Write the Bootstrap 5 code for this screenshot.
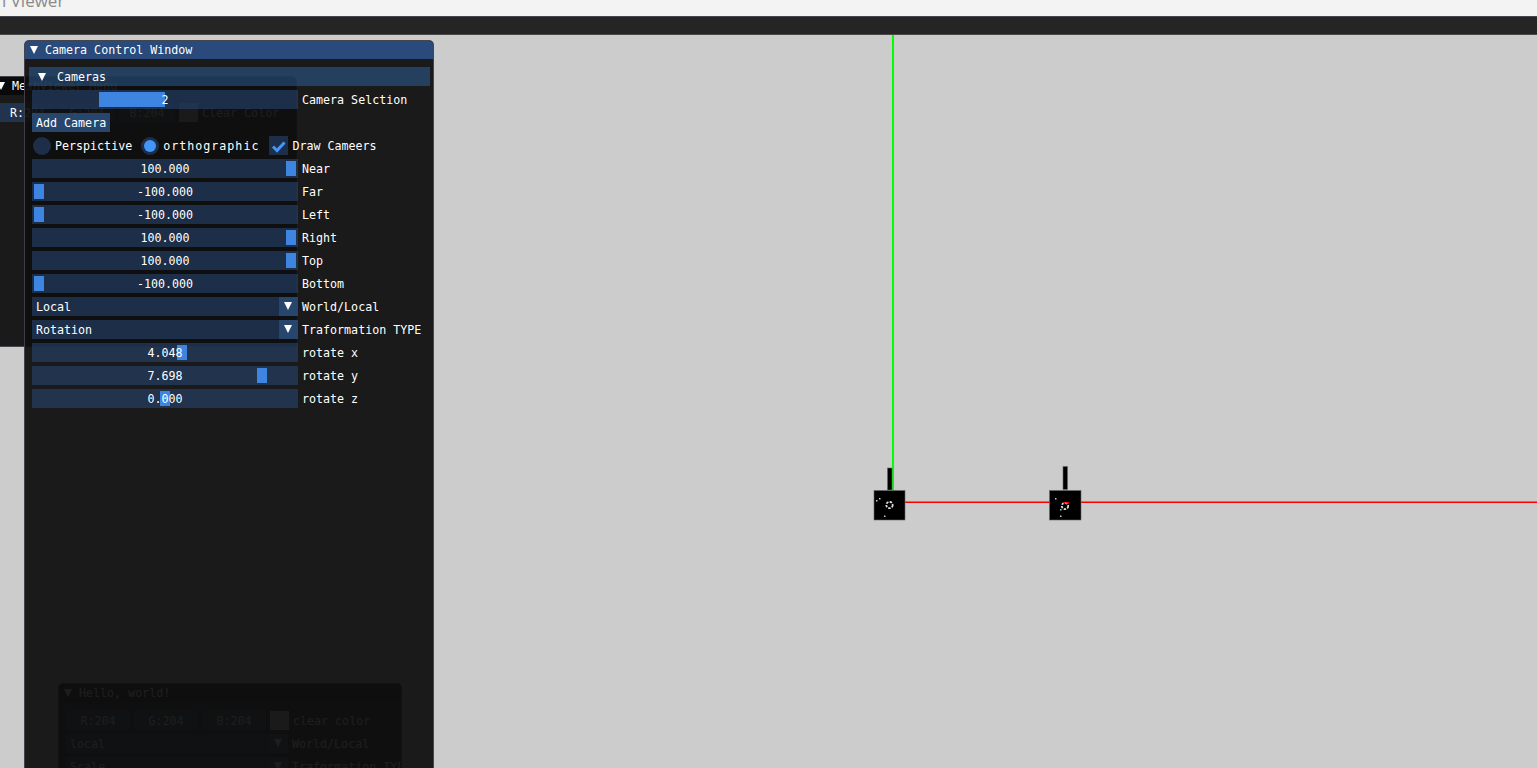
<!DOCTYPE html>
<html lang="en">
<head>
    <meta charset="UTF-8">
    <meta name="viewport" content="width=device-width, initial-scale=1.0">
    <title>Mesh Viewer</title>
    <link href="https://cdn.jsdelivr.net/npm/bootstrap@5.3.0/dist/css/bootstrap.min.css" rel="stylesheet">
    <style>
        html, body { height: 100%; overflow: hidden; }
        .app-title { height: 17px; background: #f3f3f3; border-bottom: 1px solid #45454d; overflow: hidden; }
        .app-title span { display: block; margin-top: -9px; padding-left: 2px; font: 17px/20px "Open Sans", sans-serif; color: #8a8a8a; }
        .app-menu { height: 18px; background: #252525; border-bottom: 1px solid #4a4a4a; }
        .desk { background: #ccc; overflow: hidden; }
        .scene { position: absolute; left: 0; top: 0; }

        .gui-window { position: absolute; background: rgba(15, 15, 15, .94); border: 1px solid rgba(110, 110, 128, .5); border-radius: 5px 5px 0 0;
            font: 11.67px/21px "DejaVu Sans Mono", monospace; color: #fff; white-space: nowrap; overflow: hidden; }
        .win-camera { left: 24px; top: 5px; width: 410px; height: 800px; }
        .win-mesh { left: -9px; top: 41px; width: 306px; height: 271px; }
        .win-hello { left: 58px; top: 648px; width: 344px; height: 200px; }

        .gui-title { height: 19px; margin-top: -1px; padding: 2px 0 0 5px; background: #0a0a0a; gap: 7px; }
        .win-camera .gui-title { background: #294a7a; }
        .gui-arrow { flex: none; width: 0; height: 0; margin-top: -2px; border-left: 4.5px solid transparent; border-right: 4.5px solid transparent; border-top: 8px solid #fff; }
        .gui-body { padding: 8px 3px 8px 4px; }
        .gui-header { height: 19px; margin-bottom: 4px; padding: 2px 0 0 9px; gap: 11px; background: rgba(66, 150, 250, .31); }
        .gui-rows { padding-left: 3px; }
        .gui-row { height: 19px; margin-bottom: 4px; gap: 4px; }
        .gui-frame { position: relative; flex: none; width: 266px; height: 19px; text-align: center; background: rgba(41, 74, 122, .54); }
        .gui-frame span { position: relative; }
        .gui-grab { position: absolute; top: 2px; height: 15px; width: 10px; background: #3d85e0; }
        .gui-combo { padding-left: 4px; text-align: left; }
        .gui-combo i { position: absolute; right: 0; top: 0; width: 19px; height: 19px; background: #26466e; }
        .gui-combo i::after { content: ""; position: absolute; left: 5px; top: 5px; border-left: 4.5px solid transparent; border-right: 4.5px solid transparent; border-top: 8px solid #fff; }
        .gui-btn { padding: 0 4px; background: #26466e; }
        .gui-radio { flex: none; width: 18px; height: 18px; margin-top: 1px; border-radius: 50%; background: rgba(41, 74, 122, .54); }
        .radio-first { margin-left: 1px; }
        .gui-radio b { width: 12px; height: 12px; border-radius: 50%; background: #4296fa; }
        .gui-check { flex: none; width: 19px; height: 19px; background: rgba(41, 74, 122, .54); }
        .wide-text { letter-spacing: 1px; }
        .after-radio { margin-right: 5px; }
        .after-wide { margin-right: 6px; }
        .gui-swatch { flex: none; width: 19px; height: 19px; background: #ccc; }

        .mesh-rows { padding: 8px 0 0 8px; gap: 4px; }
        .mesh-r { width: 55px; }
        .mesh-g { width: 56px; }
        .mesh-b { width: 56px; }
        .hello-rows { padding: 9px 0 0 7px; }
        .hello-c { width: 64px; }
        .hello-w { width: 222px; }
    </style>
</head>
<body class="d-flex flex-column">
    <div class="app-title"><span>l Viewer</span></div>
    <div class="app-menu"></div>

    <div class="desk position-relative flex-grow-1">
        <svg class="scene" width="1537" height="733" viewBox="0 35 1537 733">
            <rect x="892" y="35" width="2" height="456" fill="#0f0"/>
            <rect x="905" y="501.5" width="632" height="1.5" fill="#f00"/>
            <g stroke="#666" stroke-width=".6">
                <rect x="874" y="490.5" width="31" height="29.5"/>
                <rect x="887.5" y="468" width="4.5" height="22"/>
                <rect x="1049.5" y="490.5" width="31.5" height="29.5"/>
                <rect x="1063" y="466.5" width="4.5" height="23"/>
            </g>
            <g fill="none" stroke="#ddd" stroke-width="1.8" stroke-dasharray="2.5 1.2">
                <circle cx="889.5" cy="505" r="3.2"/>
                <circle cx="1065" cy="506" r="3.2"/>
            </g>
            <g fill="#ccc">
                <rect x="876" y="500" width="1.5" height="1.5"/>
                <rect x="879" y="498" width="1.5" height="1.5"/>
                <rect x="884" y="515.5" width="1.5" height="1.5"/>
                <rect x="1055" y="498" width="1.5" height="1.5"/>
                <rect x="1060" y="515.5" width="1.5" height="1.5"/>
                <rect x="1060" y="509" width="1.5" height="1.5"/>
            </g>
            <g fill="#f00">
                <rect x="1063" y="502" width="2.5" height="1.5"/>
                <rect x="1066" y="502" width="3" height="1.5"/>
            </g>
        </svg>

        <div class="gui-window win-hello">
            <div class="gui-title d-flex align-items-center"><span class="gui-arrow"></span><span>Hello, world!</span></div>
            <div class="hello-rows">
                <div class="gui-row d-flex">
                    <div class="gui-frame hello-c">R:204</div>
                    <div class="gui-frame hello-c">G:204</div>
                    <div class="gui-frame hello-c">B:204</div>
                    <div class="gui-swatch"></div>
                    <div>clear color</div>
                </div>
                <div class="gui-row d-flex">
                    <div class="gui-frame hello-w gui-combo">local<i></i></div>
                    <div>World/Local</div>
                </div>
                <div class="gui-row d-flex">
                    <div class="gui-frame hello-w gui-combo">Scale<i></i></div>
                    <div>Traformation TYPE</div>
                </div>
            </div>
        </div>

        <div class="gui-window win-mesh">
            <div class="gui-title d-flex align-items-center"><span class="gui-arrow"></span><span>MeshViewer Menu</span></div>
            <div class="mesh-rows d-flex">
                <div class="gui-frame mesh-r">R:204</div>
                <div class="gui-frame mesh-g">G:204</div>
                <div class="gui-frame mesh-b">B:204</div>
                <div class="gui-swatch"></div>
                <div>Clear Color</div>
            </div>
        </div>

        <div class="gui-window win-camera">
            <div class="gui-title d-flex align-items-center"><span class="gui-arrow"></span><span>Camera Control Window</span></div>
            <div class="gui-body">
                <div class="gui-header d-flex align-items-center"><span class="gui-arrow"></span><span>Cameras</span></div>
                <div class="gui-rows">
                    <div class="gui-row d-flex">
                        <div class="gui-frame"><div class="gui-grab" style="left: 67px; width: 66px"></div><span>2</span></div>
                        <div>Camera Selction</div>
                    </div>
                    <div class="gui-row d-flex"><div class="gui-btn">Add Camera</div></div>
                    <div class="gui-row d-flex">
                        <div class="gui-radio radio-first"></div>
                        <div class="after-radio">Perspictive</div>
                        <div class="gui-radio d-flex align-items-center justify-content-center"><b></b></div>
                        <div class="wide-text after-wide">orthographic</div>
                        <div class="gui-check">
                            <svg width="19" height="19" viewBox="0 0 19 19"><path d="M4 9.5 L8 13.5 L15.5 5.5" fill="none" stroke="#4296fa" stroke-width="3"/></svg>
                        </div>
                        <div>Draw Cameers</div>
                    </div>
                    <div class="gui-row d-flex">
                        <div class="gui-frame"><div class="gui-grab" style="left: 254px"></div><span>100.000</span></div>
                        <div>Near</div>
                    </div>
                    <div class="gui-row d-flex">
                        <div class="gui-frame"><div class="gui-grab" style="left: 2px"></div><span>-100.000</span></div>
                        <div>Far</div>
                    </div>
                    <div class="gui-row d-flex">
                        <div class="gui-frame"><div class="gui-grab" style="left: 2px"></div><span>-100.000</span></div>
                        <div>Left</div>
                    </div>
                    <div class="gui-row d-flex">
                        <div class="gui-frame"><div class="gui-grab" style="left: 254px"></div><span>100.000</span></div>
                        <div>Right</div>
                    </div>
                    <div class="gui-row d-flex">
                        <div class="gui-frame"><div class="gui-grab" style="left: 254px"></div><span>100.000</span></div>
                        <div>Top</div>
                    </div>
                    <div class="gui-row d-flex">
                        <div class="gui-frame"><div class="gui-grab" style="left: 2px"></div><span>-100.000</span></div>
                        <div>Bottom</div>
                    </div>
                    <div class="gui-row d-flex">
                        <div class="gui-frame gui-combo">Local<i></i></div>
                        <div>World/Local</div>
                    </div>
                    <div class="gui-row d-flex">
                        <div class="gui-frame gui-combo">Rotation<i></i></div>
                        <div>Traformation TYPE</div>
                    </div>
                    <div class="gui-row d-flex">
                        <div class="gui-frame"><div class="gui-grab" style="left: 145px"></div><span>4.048</span></div>
                        <div>rotate x</div>
                    </div>
                    <div class="gui-row d-flex">
                        <div class="gui-frame"><div class="gui-grab" style="left: 225px"></div><span>7.698</span></div>
                        <div>rotate y</div>
                    </div>
                    <div class="gui-row d-flex">
                        <div class="gui-frame"><div class="gui-grab" style="left: 128px"></div><span>0.000</span></div>
                        <div>rotate z</div>
                    </div>
                </div>
            </div>
        </div>
    </div>

    <script src="https://cdn.jsdelivr.net/npm/bootstrap@5.3.0/dist/js/bootstrap.bundle.min.js"></script>
</body>
</html>
